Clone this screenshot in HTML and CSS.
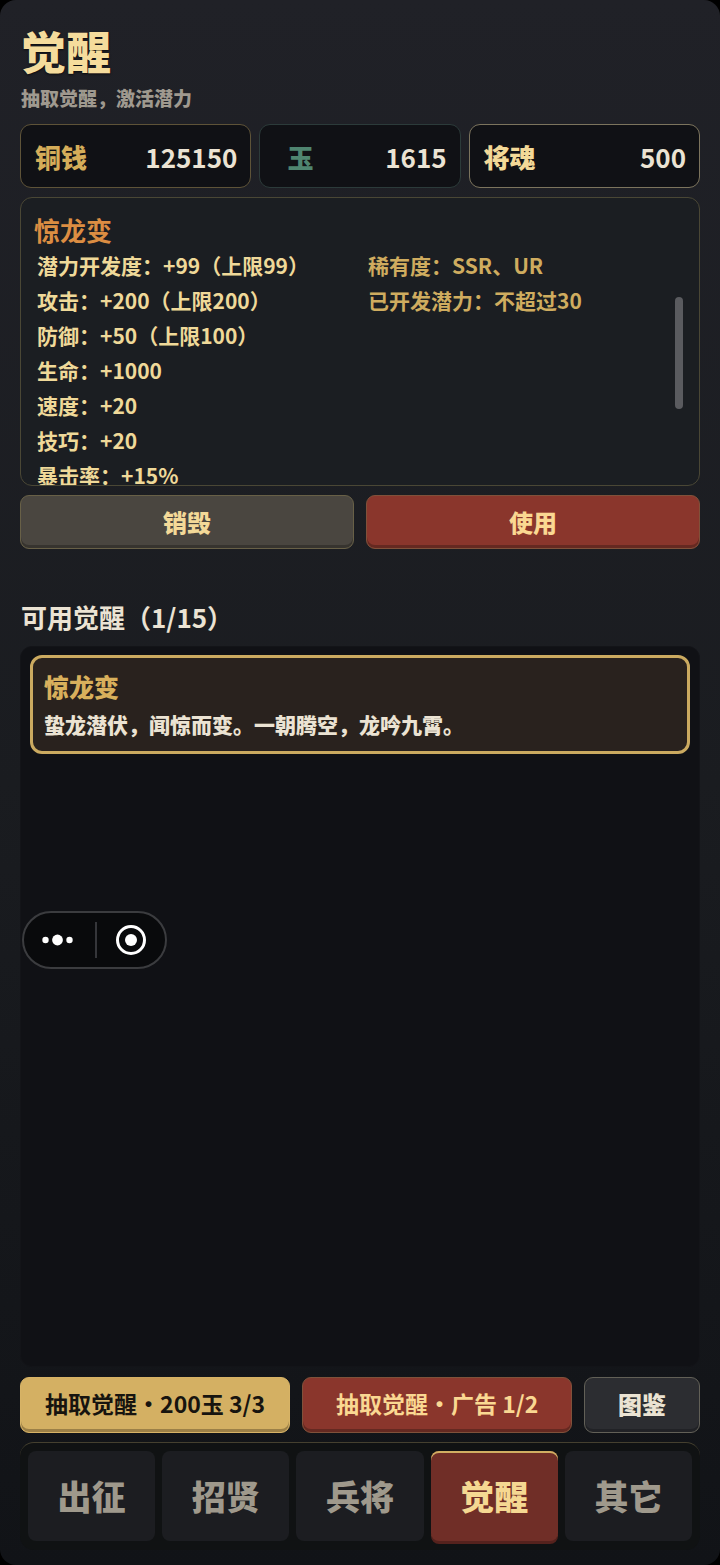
FILE: index.html
```
<!DOCTYPE html>
<html lang="zh-CN">
<head>
<meta charset="utf-8">
<meta name="viewport" content="width=device-width, initial-scale=1">
<title>觉醒</title>
<link rel="stylesheet" href="styles.css">
</head>
<body>
<div class="screen">
  <header class="header">
    <h1 class="title">觉醒</h1>
    <p class="subtitle">抽取觉醒，激活潜力</p>
  </header>

  <dl class="wallet">
    <div class="coin coin-copper"><dt>铜钱</dt><dd>125150</dd></div>
    <div class="coin coin-jade"><dt>玉</dt><dd>1615</dd></div>
    <div class="coin coin-soul"><dt>将魂</dt><dd>500</dd></div>
  </dl>

  <section class="detail">
    <div class="detail-scroll">
      <h2 class="detail-name">惊龙变</h2>
      <div class="detail-columns">
        <ul class="stats">
          <li>潜力开发度：+99（上限99）</li>
          <li>攻击：+200（上限200）</li>
          <li>防御：+50（上限100）</li>
          <li>生命：+1000</li>
          <li>速度：+20</li>
          <li>技巧：+20</li>
          <li>暴击率：+15%</li>
        </ul>
        <ul class="stats limits">
          <li>稀有度：SSR、UR</li>
          <li>已开发潜力：不超过30</li>
        </ul>
      </div>
    </div>
    <span class="thumb"></span>
  </section>

  <div class="actions">
    <button class="btn btn-stone" type="button">销毁</button>
    <button class="btn btn-red" type="button">使用</button>
  </div>

  <h2 class="list-title">可用觉醒（1/15）</h2>
  <div class="list">
    <button class="card" type="button">
      <span class="card-name">惊龙变</span>
      <span class="card-text">蛰龙潜伏，闻惊而变。一朝腾空，龙吟九霄。</span>
    </button>
  </div>

  <div class="draws">
    <button class="btn btn-draw btn-gold" type="button">抽取觉醒・200玉 3/3</button>
    <button class="btn btn-draw btn-red" type="button">抽取觉醒・广告 1/2</button>
    <button class="btn btn-gray" type="button">图鉴</button>
  </div>

  <nav class="tabs">
    <a class="tab" href="#battle">出征</a>
    <a class="tab" href="#recruit">招贤</a>
    <a class="tab" href="#troops">兵将</a>
    <a class="tab tab-active" href="#awaken" aria-current="page">觉醒</a>
    <a class="tab" href="#more">其它</a>
  </nav>

  <div class="capsule">
    <button class="capsule-btn" type="button" aria-label="更多">
      <svg width="32" height="32" viewBox="0 0 32 32" fill="#fff"><circle cx="3.5" cy="16" r="3.2"/><circle cx="15.5" cy="16" r="5.4"/><circle cx="27.5" cy="16" r="3.2"/></svg>
    </button>
    <button class="capsule-btn" type="button" aria-label="关闭">
      <svg width="32" height="32" viewBox="0 0 32 32"><circle cx="16" cy="16" r="13.5" fill="none" stroke="#fff" stroke-width="3"/><circle cx="16" cy="16" r="6" fill="#fff"/></svg>
    </button>
  </div>
</div>
</body>
</html>
```
FILE: styles.css
```
* { box-sizing: border-box; }

body {
  margin: 0;
  background: #000;
  color: #ebe3d3;
  font-family: "Noto Sans CJK SC", sans-serif;
  font-weight: 900;
}

h1, h2, p, ul, dl, dd { margin: 0; padding: 0; }
h1 { font-weight: 900; }
ul { list-style: none; }
button { font: inherit; cursor: pointer; }

.screen {
  position: relative;
  display: flex;
  flex-direction: column;
  min-height: 100vh;
  padding: 24px 20px 15px;
  border-radius: 16px;
  background: linear-gradient(#202127, #1a1c20 50%, #111317);
}

.title {
  padding-left: 1px;
  font-size: 45px;
  line-height: 54px;
  color: #f5dc9c;
  text-shadow: 0 1px 2px #0a0b0e;
}

.subtitle {
  margin: 6px 0 12px;
  padding-left: 1px;
  font-size: 19px;
  line-height: 28px;
  color: #9f998f;
}

.wallet {
  display: grid;
  grid-template-columns: 23fr 20fr 23fr;
  gap: 8px;
}

.coin {
  display: flex;
  align-items: center;
  justify-content: space-between;
  height: 64px;
  padding: 0 13px 0 14px;
  border: 1px solid #5e5338;
  border-radius: 11px;
  background: #101115;
  font-size: 26px;
}
.coin dt { width: 52px; text-align: center; color: #d5ad59; }
.coin dd { font-weight: 700; }
.coin-jade { border-color: #2c3b3a; }
.coin-jade dt { color: #4f8570; }
.coin-soul { border-color: #7c745d; }
.coin-soul dt { color: #f3d998; }

.detail {
  position: relative;
  margin-top: 9px;
  border: 1px solid #4a4735;
  border-radius: 12px;
  background: #1b1e22;
}
.detail-scroll {
  height: 287px;
  padding: 14px 13px 0;
  overflow-y: auto;
  scrollbar-width: none;
}
.detail-name {
  font-size: 26px;
  line-height: 36px;
  font-weight: 700;
  color: #db8d42;
}
.detail-columns { display: grid; grid-template-columns: 1fr 1fr; }
.stats {
  padding-left: 3px;
  font-size: 21px;
  line-height: 35px;
  font-weight: 700;
  color: #efd999;
}
.limits { padding-left: 8px; color: #cfac5f; }
.thumb {
  position: absolute;
  top: 99px;
  right: 16px;
  width: 8px;
  height: 112px;
  border-radius: 4px;
  background: #5a5b5f;
}

.actions {
  display: grid;
  grid-template-columns: 1fr 1fr;
  gap: 12px;
  margin-top: 9px;
}

.btn {
  height: 54px;
  padding: 0 0 2px;
  border: 1px solid;
  border-radius: 9px;
  font-size: 24px;
}
.btn-stone {
  border-color: #686047;
  background: #4a4640;
  box-shadow: inset 0 -3px #37342f;
  color: #f3d998;
}
.btn-red {
  border-color: #80513a;
  background: #8a362c;
  box-shadow: inset 0 -3px #652921;
  color: #fad892;
}
.btn-gold {
  border-color: #d7b366;
  background: #d4b063;
  box-shadow: inset 0 -3px #9c8047;
  color: #17140f;
}
.btn-gray {
  border-color: #626057;
  background: #2c2d31;
  box-shadow: inset 0 -3px #212226;
  color: #ebe3d3;
}

.list-title {
  margin: 49px 0 10px;
  padding-left: 1px;
  font-size: 26px;
  line-height: 38px;
  font-weight: 700;
}

.list {
  flex: 1;
  min-height: 200px;
  padding: 8px 9px;
  border: 1px solid #131418;
  border-radius: 12px;
  background: #101115;
}
.card {
  display: flex;
  flex-direction: column;
  width: 100%;
  padding: 10px 11px 8px;
  border: 3px solid #cbaa60;
  border-radius: 12px;
  background: #29221e;
  color: #ebe3d3;
  text-align: left;
}
.card-name { font-size: 25px; line-height: 37px; color: #d8b05c; }
.card-text { font-size: 21px; line-height: 38px; }

.draws {
  display: grid;
  grid-template-columns: 7fr 7fr 3fr;
  gap: 12px;
  margin-top: 10px;
}
.draws .btn { height: 56px; padding-bottom: 4px; }
.draws .btn-draw { font-size: 23px; font-weight: 700; }

.tabs {
  display: grid;
  grid-template-columns: repeat(5, 1fr);
  gap: 7px;
  margin-top: 9px;
  padding: 8px 8px 9px;
  border-top: 1px solid #45402f;
  border-radius: 14px;
  background: #101213;
}
.tab {
  display: flex;
  align-items: center;
  justify-content: center;
  height: 90px;
  padding-bottom: 1px;
  border-radius: 8px;
  background: #1c1d21;
  color: #9f998c;
  font-size: 34px;
  text-decoration: none;
}
.tab-active {
  background: #702e27;
  box-shadow: inset 0 2px #d1ae62, 0 3px #55221d;
  color: #f5d892;
}

.capsule {
  position: absolute;
  top: 911px;
  left: 22px;
  display: flex;
  width: 145px;
  height: 58px;
  border: 2px solid #3b3c3f;
  border-radius: 29px;
  background: #090a0c;
}
.capsule-btn {
  position: relative;
  flex: 1;
  display: grid;
  place-items: center;
  padding: 0 2px 0 0;
  border: 0;
  background: none;
}
.capsule-btn + .capsule-btn { padding: 0 0 0 2px; }
.capsule-btn + .capsule-btn::before {
  content: "";
  position: absolute;
  left: 0;
  top: 9px;
  bottom: 9px;
  width: 2px;
  background: #35363a;
}
```
